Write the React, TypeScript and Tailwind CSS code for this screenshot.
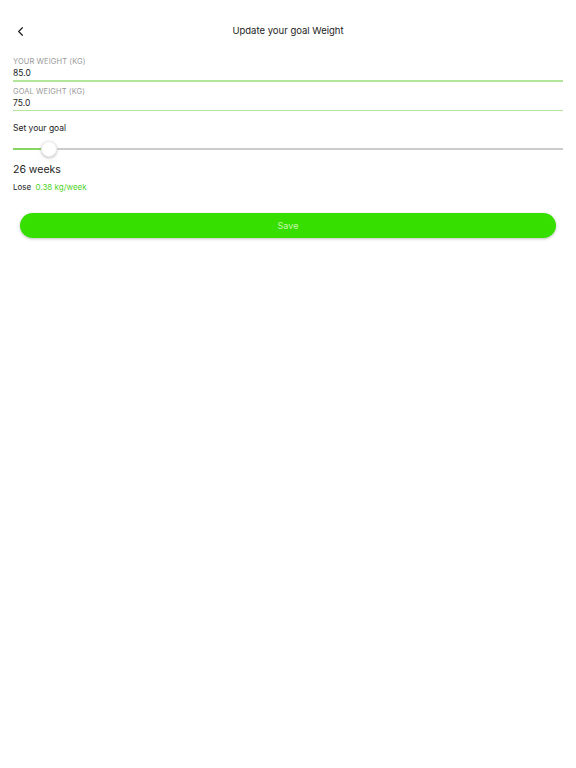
import { ChevronLeft } from "lucide-react";

const font = { fontFamily: "Inter, 'Noto Sans', sans-serif" };

function Field({ label, value }: { label: string; value: string }) {
  return (
    <div className="flex flex-col">
      <span className="text-[7.5px] leading-[10px] text-[#9a9a9a] tracking-[0.1px]">{label}</span>
      <span className="mt-[1px] text-[8.5px] leading-[11px] text-[#222]">{value}</span>
      <div className="mt-[1px] h-[1.5px] w-full bg-[#b3e69b]" />
    </div>
  );
}

export default function App() {
  return (
    <div style={font} className="min-h-[768px] w-[576px] bg-white">
      <header className="relative flex h-[57px] items-center justify-center pt-[6px]">
        <button className="absolute left-[13px] top-[24px] text-[#222]">
          <ChevronLeft size={15} strokeWidth={1.9} />
        </button>
        <h1 className="text-[9.5px] text-[#222]">Update your goal Weight</h1>
      </header>

      <main className="flex flex-col px-[13px]">
        <div className="flex flex-col gap-[5px]">
          <Field label="YOUR WEIGHT (KG)" value="85.0" />
          <Field label="GOAL WEIGHT (KG)" value="75.0" />
        </div>

        <p className="mt-[11px] text-[8.5px] leading-[12px] text-[#222]">Set your goal</p>

        <div className="mt-[7px] flex h-[16px] items-center">
          <div className="h-[1.5px] w-[28px] bg-[#86d663]" />
          <div className="h-[16px] w-[16px] shrink-0 rounded-full border border-[#eee] bg-white shadow-[0_1px_3px_rgba(0,0,0,0.25)]" />
          <div className="h-[1.5px] flex-1 bg-[#cccccc]" />
        </div>

        <p className="mt-[6px] text-[10.5px] leading-[14px] text-[#222]">26 weeks</p>
        <p className="mt-[4px] text-[8px] leading-[12px] text-[#222]">
          Lose <span className="ml-[2px] text-[#4fd31f]">0.38 kg/week</span>
        </p>

        <div className="mt-[20px] px-[7px]">
          <button className="flex h-[25px] w-full items-center justify-center rounded-full bg-[#36df00] text-[9px] text-[#c8f5b0] shadow-[0_1px_3px_rgba(0,0,0,0.25)]">
            Save
          </button>
        </div>
      </main>
    </div>
  );
}
